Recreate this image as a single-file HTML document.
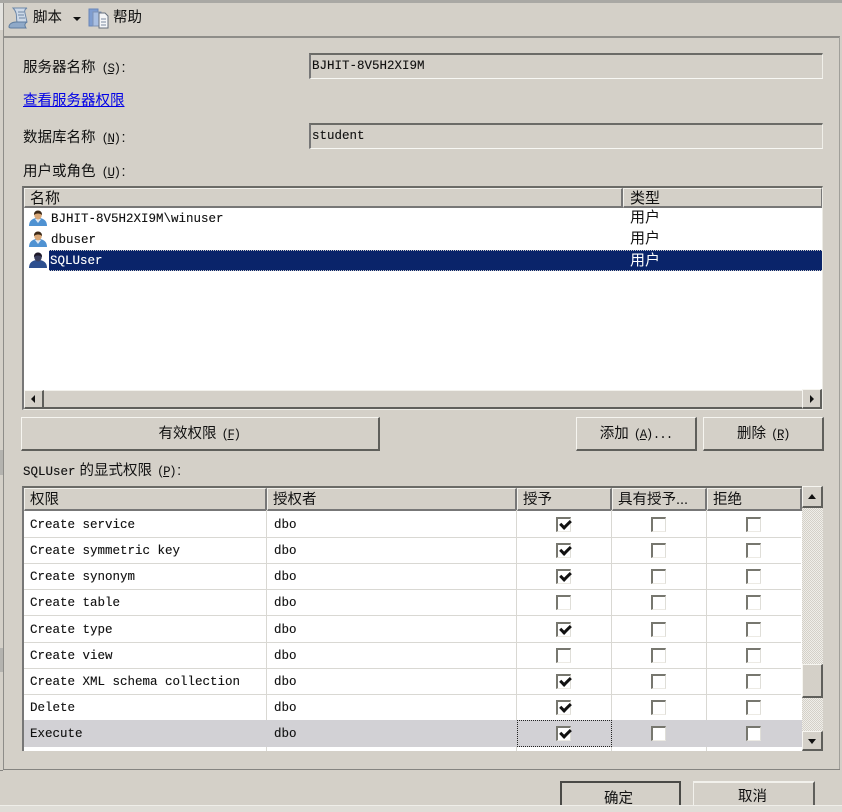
<!DOCTYPE html>
<html><head><meta charset="utf-8"><style>
html,body{margin:0;padding:0}
body{width:842px;height:812px;position:relative;overflow:hidden;background:#d4d0c8;font-family:"Liberation Sans","Noto Sans CJK SC",sans-serif;color:#111}
div,a,svg{position:absolute;box-sizing:border-box}
.t{font-size:14.5px;line-height:18px;white-space:nowrap}
.m{font-family:"Liberation Mono","Noto Sans CJK SC",monospace;font-size:12.5px;line-height:16px;white-space:nowrap;-webkit-text-stroke:.12px currentColor}
.u{font-size:12.5px;font-family:"Liberation Mono",monospace;letter-spacing:-1.500px;position:relative;top:0}
.u span{text-decoration:underline}
.box{border-top:2px solid #6b6b67;border-left:2px solid #777;border-bottom:1px solid #f8f8f4;border-right:1px solid #f0efe9}
.btn{background:#d4d0c8;border-top:1px solid #f6f5f0;border-left:1px solid #f6f5f0;border-right:2px solid #5f5f5b;border-bottom:2px solid #5f5f5b;text-align:center}
.hd{background:#d4d0c8;border-top:1px solid #f2f1ec;border-left:1px solid #f2f1ec;border-right:2px solid #777;border-bottom:2px solid #777;height:23px;top:488px;font-size:14.5px;line-height:22px;padding-left:5px;white-space:nowrap}
.hl{left:24px;width:777px;height:1px;background:#d9d8d3}
.vl{top:510px;height:241px;width:1px;background:#d9d8d3}
.c{width:15px;height:15px;background:#fff;border-top:2px solid #77776f;border-left:2px solid #77776f;border-right:1px solid #dfded8;border-bottom:1px solid #eceae4}
.k:after{content:"";position:absolute;left:1.500px;top:.5px;width:8px;height:4px;border-left:3px solid #111;border-bottom:3px solid #111;transform:rotate(-45deg)}
.tr{width:0;height:0}
</style></head><body>
<!-- window chrome -->
<div style="left:0;top:0;width:842px;height:3px;background:#a9a8a4"></div>
<div style="left:0;top:3px;width:3px;height:27px;background:#e4e3df"></div>
<div style="left:3px;top:3px;width:1px;height:766px;background:#8e8d89"></div>
<div style="left:0;top:450px;width:3px;height:25px;background:#b4b3af"></div>
<div style="left:0;top:648px;width:3px;height:24px;background:#b4b3af"></div>
<div style="left:4px;top:36px;width:836px;height:2px;background:#8e8d89"></div>
<div style="left:839px;top:37px;width:1px;height:733px;background:#a09f9a"></div>
<div style="left:3px;top:769px;width:837px;height:1px;background:#858480"></div>
<div style="left:0;top:770px;width:3px;height:1px;background:#858480"></div>
<div style="left:0;top:805px;width:842px;height:7px;background:#dfddd7"></div>
<div style="left:0;top:805px;width:842px;height:1px;background:#efeee9"></div>

<!-- toolbar -->
<svg style="left:8px;top:7px" width="22" height="22" viewBox="0 0 22 22"><path d="M5 1h14c-2 1-3 3-2 5l2 9H9C8 11 9 9 8 6 7.500 4 6 2 5 1z" fill="#cdd9e8" stroke="#6d87a8"/><path d="M1 20c0-3 3-5 7-5h11c-2 1-3 3-1 6H3c-1 0-2-.4-2-1z" fill="#8fa9c8" stroke="#5f7d9f"/><path d="M10 5h6M10 8h6M11 11h6" stroke="#6f86a5" fill="none"/></svg>
<div class="t" style="left:33px;top:9px;font-size:14.5px">脚本</div>
<div class="tr" style="left:73px;top:17px;border-left:4px solid transparent;border-right:4px solid transparent;border-top:4px solid #111"></div>
<svg style="left:88px;top:7px" width="22" height="22" viewBox="0 0 22 22"><rect x="1" y="2" width="9" height="17" fill="#7f9dd0" stroke="#6a86b8"/><rect x="5" y="5" width="8" height="14" fill="#a9bfe2" stroke="#7f93b5"/><path d="M11 6h6l3 3v12h-9z" fill="#f5f6f8" stroke="#66707e"/><path d="M13 12h5M13 15h5M13 18h5" stroke="#7a8aa0" fill="none"/></svg>
<div class="t" style="left:113px;top:9px;font-size:14.5px">帮助</div>

<!-- fields -->
<div class="t" style="left:23px;top:59px">服务器名称<span class="u" style="margin-left:6px">(<span>S</span>)</span><span style="margin-left:2px">:</span></div>
<div class="box" style="left:309px;top:53px;width:514px;height:26px"></div>
<div class="m" style="left:312px;top:58px">BJHIT-8V5H2XI9M</div>
<a class="t" style="left:23px;top:92px;color:#0000e6;text-decoration:underline">查看服务器权限</a>
<div class="t" style="left:23px;top:129px">数据库名称<span class="u" style="margin-left:6px">(<span>N</span>)</span><span style="margin-left:2px">:</span></div>
<div class="box" style="left:309px;top:123px;width:514px;height:26px"></div>
<div class="m" style="left:312px;top:128px">student</div>
<div class="t" style="left:23px;top:163px">用户或角色<span class="u" style="margin-left:6px">(<span>U</span>)</span><span style="margin-left:2px">:</span></div>

<!-- user list -->
<div style="left:22px;top:186px;width:801px;height:224px;background:#fff;border-top:2px solid #6b6b67;border-left:2px solid #777;border-right:1px solid #ecebe5;border-bottom:1px solid #ecebe5"></div>
<div style="left:24px;top:188px;width:599px;height:20px;background:#d4d0c8;border-bottom:2px solid #777;border-right:2px solid #777;border-top:1px solid #f2f1ec;border-left:1px solid #f2f1ec"></div>
<div style="left:623px;top:188px;width:199px;height:20px;background:#d4d0c8;border-bottom:2px solid #777;border-right:1px solid #777;border-top:1px solid #f2f1ec;border-left:1px solid #f2f1ec"></div>
<div class="t" style="left:30px;top:190px;font-size:15px">名称</div>
<div class="t" style="left:630px;top:190px;font-size:15px">类型</div>

<svg style="left:29px;top:209px" width="18" height="18" viewBox="0 0 18 18"><path d="M0 17c0-5 3-8 9-8s9 3 9 8z" fill="#4f92d2"/><path d="M6 10l3 4 3-4z" fill="#dfe8f3"/><ellipse cx="9" cy="6" rx="3.800" ry="4.500" fill="#d9a878"/><path d="M5 6C4.500 0 13.500 0 13 6c-2-2-6-2-8 0z" fill="#3d2a18"/></svg>
<svg style="left:29px;top:230px" width="18" height="18" viewBox="0 0 18 18"><path d="M0 17c0-5 3-8 9-8s9 3 9 8z" fill="#4f92d2"/><path d="M6 10l3 4 3-4z" fill="#dfe8f3"/><ellipse cx="9" cy="6" rx="3.800" ry="4.500" fill="#d9a878"/><path d="M5 6C4.500 0 13.500 0 13 6c-2-2-6-2-8 0z" fill="#3d2a18"/></svg>
<svg style="left:29px;top:251px" width="18" height="18" viewBox="0 0 18 18"><path d="M0 17c0-5 3-8 9-8s9 3 9 8z" fill="#2d4f8e"/><ellipse cx="9" cy="6" rx="3.800" ry="4.500" fill="#3a3f5e"/><path d="M5 6C4.500 0 13.500 0 13 6c-2-2-6-2-8 0z" fill="#1e1a2a"/></svg>
<div class="m" style="left:51px;top:211px">BJHIT-8V5H2XI9M\winuser</div>
<div class="t" style="left:630px;top:209px;font-size:15px">用户</div>
<div class="m" style="left:51px;top:232px">dbuser</div>
<div class="t" style="left:630px;top:230px;font-size:15px">用户</div>
<div style="left:49px;top:250px;width:773px;height:21px;background:#0a246a;border-top:1px dotted #c8c8c8;border-bottom:1px dotted #c8c8c8"></div>
<div class="m" style="left:50px;top:253px;color:#fff">SQLUser</div>
<div class="t" style="left:630px;top:252px;font-size:15px;color:#fff">用户</div>

<!-- h scrollbar -->
<div style="left:24px;top:390px;width:798px;height:19px;background:#d4d0c8;border-top:1px solid #f2f1ec;border-bottom:2px solid #5f5f5b"></div>
<div class="btn" style="left:24px;top:390px;width:20px;height:19px"></div>
<div class="tr" style="left:31px;top:395px;border-top:4px solid transparent;border-bottom:4px solid transparent;border-right:4px solid #111"></div>
<div class="btn" style="left:802px;top:389px;width:20px;height:20px"></div>
<div class="tr" style="left:810px;top:395px;border-top:4px solid transparent;border-bottom:4px solid transparent;border-left:4px solid #111"></div>

<!-- buttons -->
<div class="btn t" style="left:21px;top:417px;width:359px;height:34px;line-height:33px;padding-right:2px">有效权限<span class="u" style="margin-left:5px">(<span>F</span>)</span></div>
<div class="btn t" style="left:576px;top:417px;width:121px;height:34px;line-height:33px">添加<span class="u" style="margin-left:5px">(<span>A</span>)</span><span class="u" style="letter-spacing:-1px;margin-left:1px">...</span></div>
<div class="btn t" style="left:703px;top:417px;width:121px;height:34px;line-height:33px">删除<span class="u" style="margin-left:5px">(<span>R</span>)</span></div>
<div class="t" style="left:23px;top:462px"><span class="m" style="position:static">SQLUser</span> 的显式权限<span class="u" style="margin-left:5px">(<span>P</span>)</span><span style="margin-left:2px">:</span></div>

<!-- perm table -->
<div style="left:22px;top:486px;width:781px;height:265px;background:#fff;border-top:2px solid #6b6b67;border-left:2px solid #777"></div>
<div class="hd" style="left:24px;width:243px">权限</div>
<div class="hd" style="left:267px;width:250px">授权者</div>
<div class="hd" style="left:517px;width:95px">授予</div>
<div class="hd" style="left:612px;width:95px">具有授予...</div>
<div class="hd" style="left:707px;width:95px">拒绝</div>

<div class="hl" style="top:537px"></div><div class="hl" style="top:563px"></div><div class="hl" style="top:589px"></div><div class="hl" style="top:615px"></div><div class="hl" style="top:642px"></div><div class="hl" style="top:668px"></div><div class="hl" style="top:694px"></div>
<div class="vl" style="left:266px"></div><div class="vl" style="left:516px"></div><div class="vl" style="left:611px"></div><div class="vl" style="left:706px"></div>
<div style="left:24px;top:720px;width:778px;height:27px;background:#d2d1d5"></div>
<div style="left:517px;top:720px;width:95px;height:27px;border:1px dotted #222"></div>

<div class="m" style="left:30px;top:517px">Create service</div><div class="m" style="left:274px;top:517px">dbo</div>
<div class="m" style="left:30px;top:543px">Create symmetric key</div><div class="m" style="left:274px;top:543px">dbo</div>
<div class="m" style="left:30px;top:569px">Create synonym</div><div class="m" style="left:274px;top:569px">dbo</div>
<div class="m" style="left:30px;top:595px">Create table</div><div class="m" style="left:274px;top:595px">dbo</div>
<div class="m" style="left:30px;top:622px">Create type</div><div class="m" style="left:274px;top:622px">dbo</div>
<div class="m" style="left:30px;top:648px">Create view</div><div class="m" style="left:274px;top:648px">dbo</div>
<div class="m" style="left:30px;top:674px">Create XML schema collection</div><div class="m" style="left:274px;top:674px">dbo</div>
<div class="m" style="left:30px;top:700px">Delete</div><div class="m" style="left:274px;top:700px">dbo</div>
<div class="m" style="left:30px;top:726px">Execute</div><div class="m" style="left:274px;top:726px">dbo</div>

<!-- checkboxes -->
<div class="c k" style="left:556px;top:517px"></div><div class="c" style="left:651px;top:517px"></div><div class="c" style="left:746px;top:517px"></div>
<div class="c k" style="left:556px;top:543px"></div><div class="c" style="left:651px;top:543px"></div><div class="c" style="left:746px;top:543px"></div>
<div class="c k" style="left:556px;top:569px"></div><div class="c" style="left:651px;top:569px"></div><div class="c" style="left:746px;top:569px"></div>
<div class="c" style="left:556px;top:595px"></div><div class="c" style="left:651px;top:595px"></div><div class="c" style="left:746px;top:595px"></div>
<div class="c k" style="left:556px;top:622px"></div><div class="c" style="left:651px;top:622px"></div><div class="c" style="left:746px;top:622px"></div>
<div class="c" style="left:556px;top:648px"></div><div class="c" style="left:651px;top:648px"></div><div class="c" style="left:746px;top:648px"></div>
<div class="c k" style="left:556px;top:674px"></div><div class="c" style="left:651px;top:674px"></div><div class="c" style="left:746px;top:674px"></div>
<div class="c k" style="left:556px;top:700px"></div><div class="c" style="left:651px;top:700px"></div><div class="c" style="left:746px;top:700px"></div>
<div class="c k" style="left:556px;top:726px"></div><div class="c" style="left:651px;top:726px"></div><div class="c" style="left:746px;top:726px"></div>

<!-- v scrollbar -->
<div style="left:802px;top:486px;width:21px;height:265px;background:repeating-conic-gradient(#efeee9 0 25%,#d4d0c8 0 50%) 0 0/2px 2px"></div>
<div class="btn" style="left:802px;top:486px;width:21px;height:22px"></div>
<div class="tr" style="left:808px;top:494px;border-left:4.500px solid transparent;border-right:4.500px solid transparent;border-bottom:5px solid #111"></div>
<div class="btn" style="left:802px;top:664px;width:21px;height:34px"></div>
<div class="btn" style="left:802px;top:731px;width:21px;height:20px"></div>
<div class="tr" style="left:808px;top:739px;border-left:4.500px solid transparent;border-right:4.500px solid transparent;border-top:5px solid #111"></div>

<!-- footer buttons -->
<div style="left:560px;top:781px;width:121px;height:24px;border-top:2px solid #4a4a47;border-left:2px solid #4a4a47;border-right:2px solid #4a4a47"></div>
<div style="left:693px;top:781px;width:122px;height:24px;border-top:2px solid #f2f1ec;border-left:1px solid #f2f1ec;border-right:2px solid #5f5f5b"></div>
<div class="t" style="left:604px;top:790px;line-height:18px">确定</div>
<div class="t" style="left:738px;top:788px;line-height:18px">取消</div>
</body></html>
